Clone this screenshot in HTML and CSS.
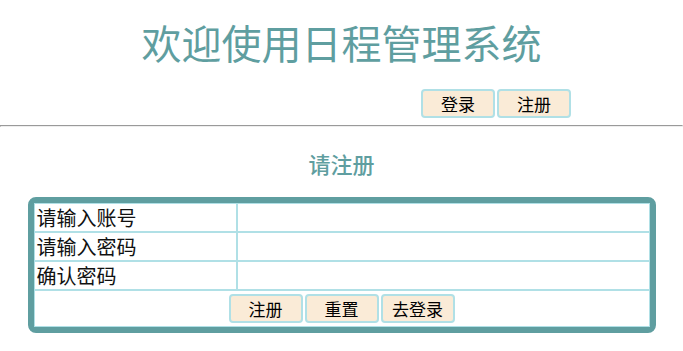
FILE: index.html
```html
<!DOCTYPE html>
<html lang="zh-CN">
<head>
  <meta charset="UTF-8" />
  <meta name="viewport" content="width=device-width, initial-scale=1.0"/>
  <title>日程管理系统 - 注册</title>
  <link rel="stylesheet" href="styles.css">
</head>
<body>
  <h1 class="title">欢迎使用日程管理系统</h1>

  <div class="top-nav">
    <button class="btn" type="button">登录</button>
    <button class="btn" type="button">注册</button>
  </div>

  <hr />

  <h3 class="sub-title">请注册</h3>

  <form class="reg-form">
    <table class="reg-table">
      <tr>
        <td class="label">请输入账号</td>
        <td><input class="field" type="text" name="username" /></td>
      </tr>
      <tr>
        <td class="label">请输入密码</td>
        <td><input class="field" type="password" name="password" /></td>
      </tr>
      <tr>
        <td class="label">确认密码</td>
        <td><input class="field" type="password" name="confirm" /></td>
      </tr>
      <tr>
        <td class="actions" colspan="2">
          <button class="btn" type="submit">注册</button>
          <button class="btn" type="reset">重置</button>
          <button class="btn" type="button">去登录</button>
        </td>
      </tr>
    </table>
  </form>
</body>
</html>
```

FILE: styles.css
```css
body {
  margin: 0;
  font-family: "Noto Sans CJK SC", "Noto Sans", sans-serif;
  background-color: #ffffff;
}

.title {
  margin: 18px 0 0;
  font-size: 40px;
  line-height: 48px;
  font-weight: normal;
  color: cadetblue;
  text-align: center;
}

.top-nav {
  display: flex;
  justify-content: flex-end;
  gap: 2px;
  margin-top: 23px;
  padding-right: 112px;
}

.btn {
  width: 74px;
  height: 29px;
  padding: 0;
  font-family: inherit;
  font-size: 17px;
  line-height: 25px;
  color: #000;
  background-color: antiquewhite;
  border: 2px solid powderblue;
  border-radius: 4px;
  cursor: pointer;
}

hr {
  margin: 7px 0 0;
}

.sub-title {
  margin: 21px 0 0;
  font-size: 22px;
  line-height: 30px;
  font-weight: 500;
  color: cadetblue;
  text-align: center;
}

.reg-form {
  margin-top: 19px;
}

.reg-table {
  width: 628px;
  margin: 0 auto;
  border: 6px solid cadetblue;
  border-radius: 8px;
  border-spacing: 0;
}

.reg-table td {
  border: 1px solid powderblue;
  padding: 0;
  height: 27px;
  font-size: 20px;
  line-height: 27px;
}

.reg-table .label {
  width: 199px;
  padding-left: 2px;
  color: #111;
}

.field {
  display: block;
  width: 100%;
  height: 27px;
  box-sizing: border-box;
  border: none;
  outline: none;
  background: transparent;
  font-size: 18px;
}

.reg-table .actions {
  height: 32px;
  padding: 1px 0 2px;
  text-align: center;
  font-size: 0;
}

.actions .btn {
  margin: 0 1px;
  vertical-align: top;
}
```
